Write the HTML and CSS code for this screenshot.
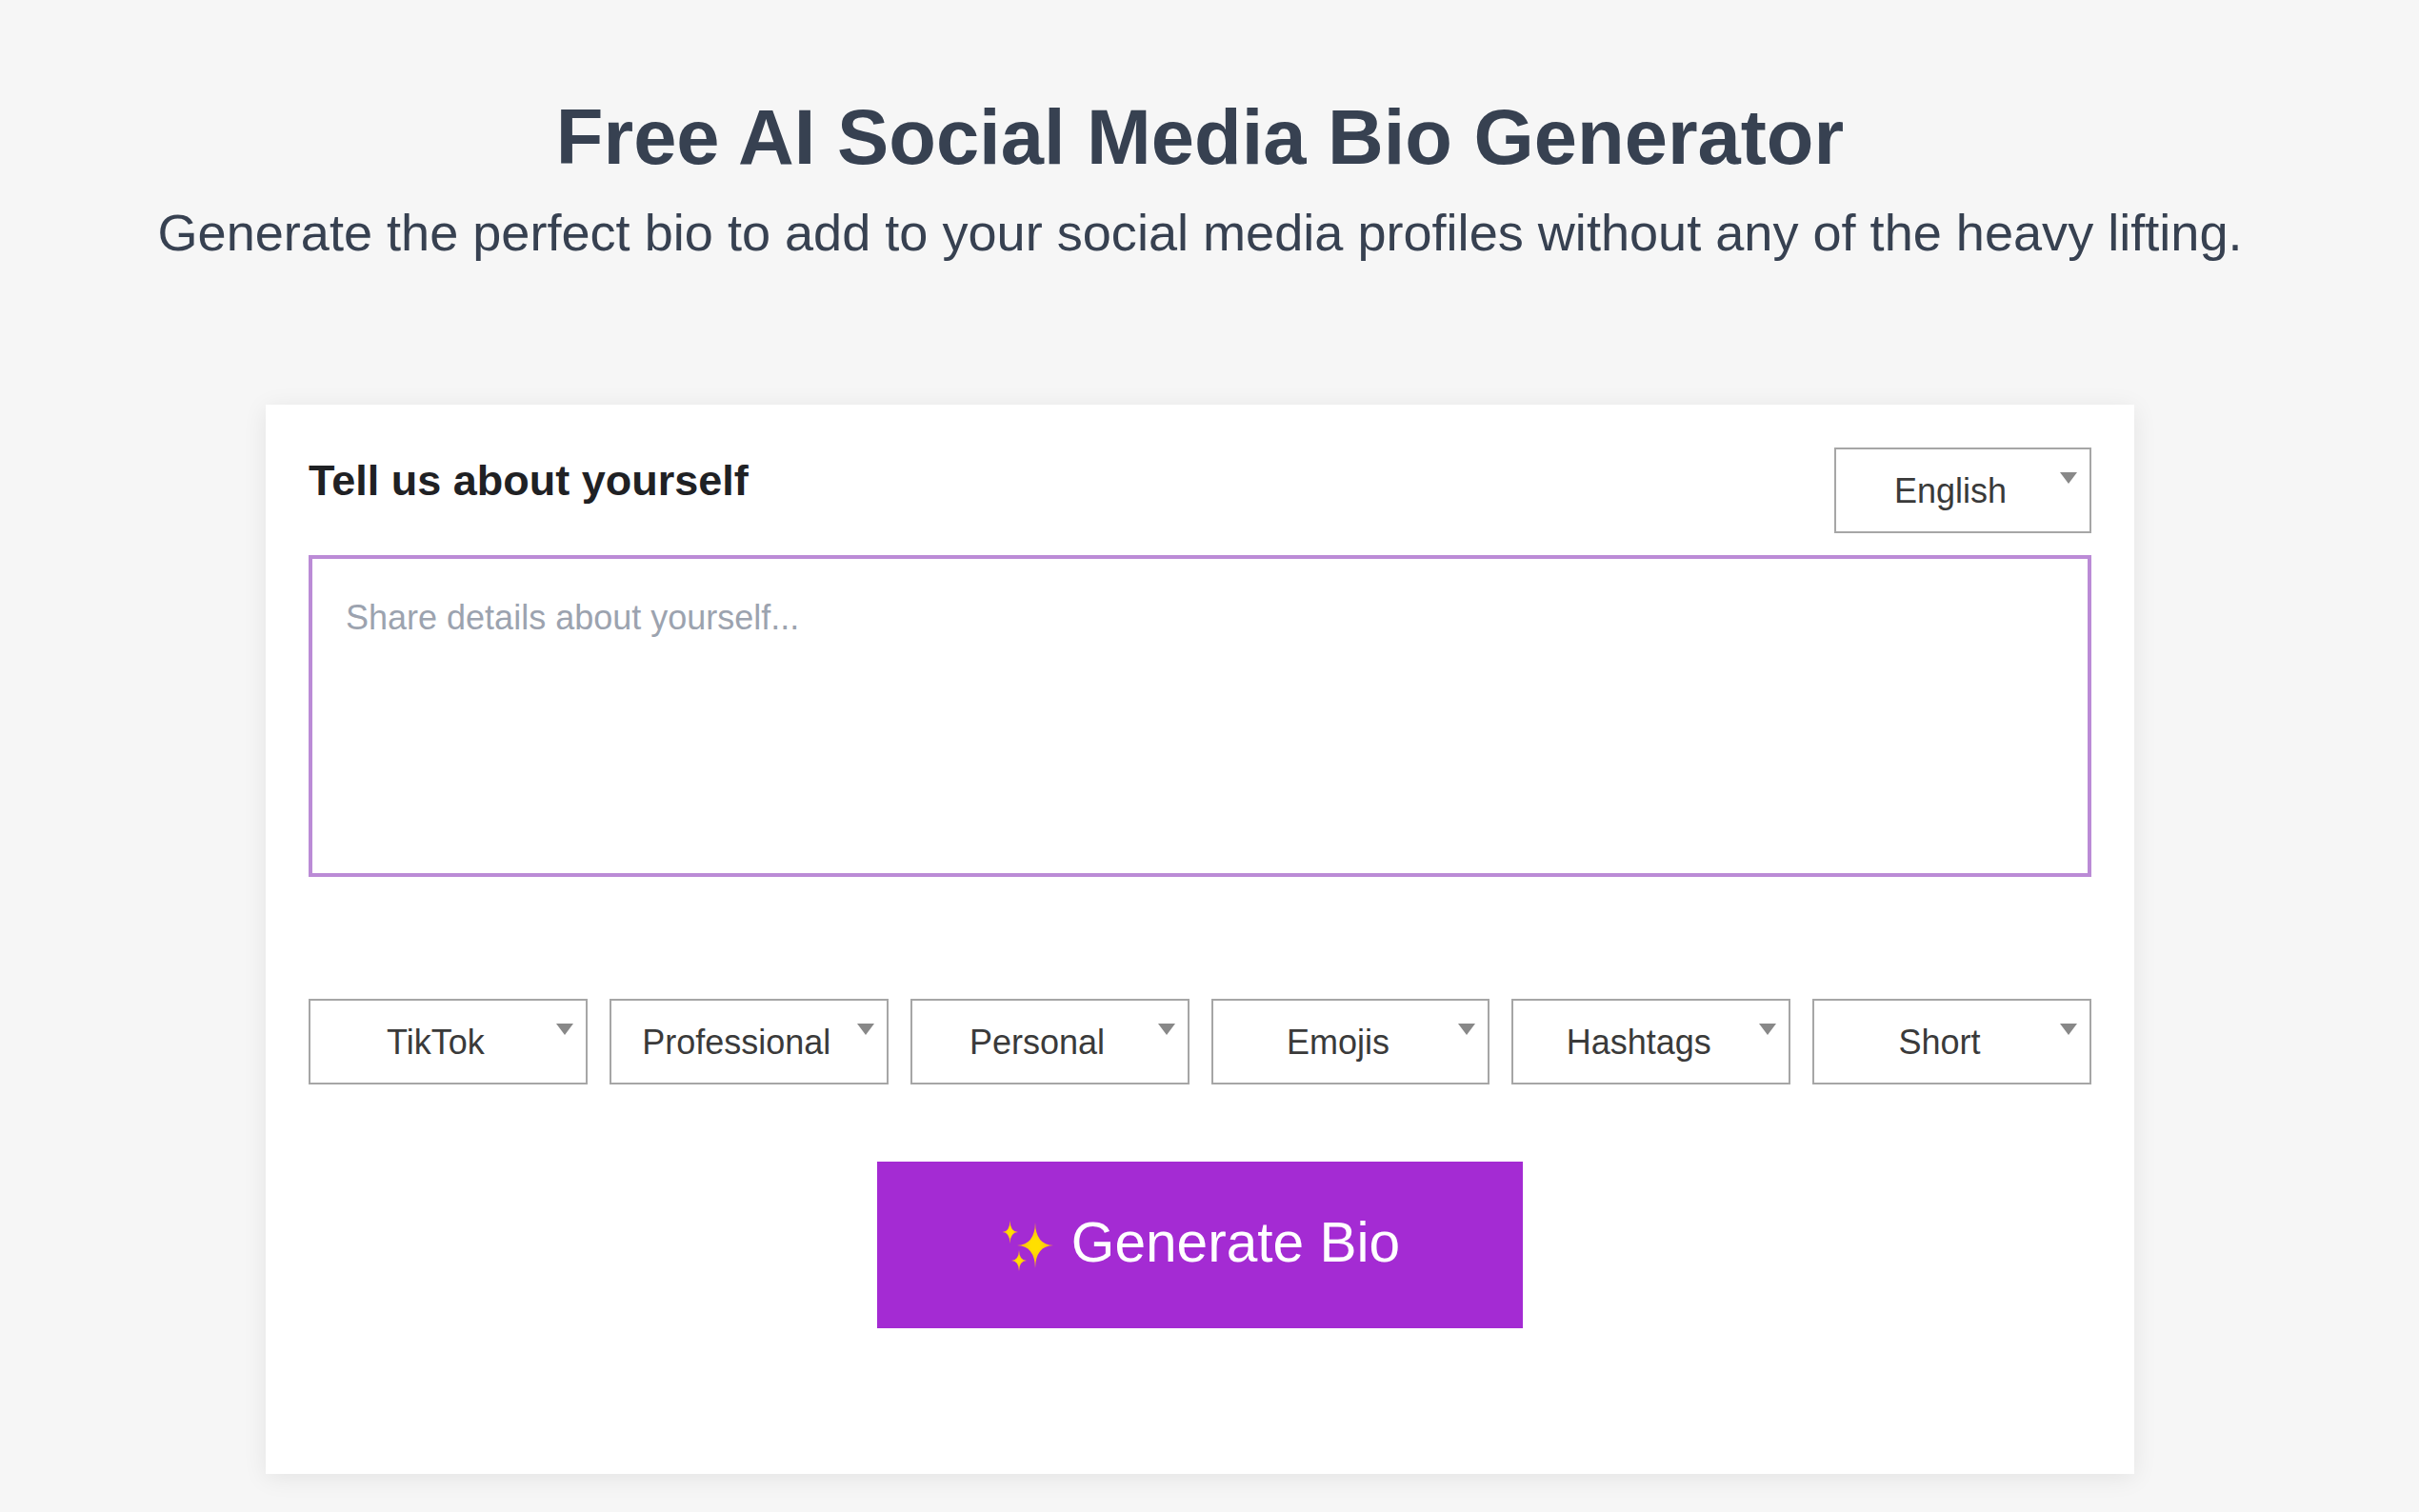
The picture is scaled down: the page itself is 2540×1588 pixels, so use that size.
FILE: index.html
```html
<!DOCTYPE html>
<html lang="en">
<head>
  <meta charset="UTF-8" />
  <title>Free AI Social Media Bio Generator</title>
  <link rel="stylesheet" href="styles.css">
</head>
<body>

  <header class="intro">
    <h1>Free AI Social Media Bio Generator</h1>
    <p>Generate the perfect bio to add to your social media profiles without any of the heavy lifting.</p>
  </header>

  <main class="card">
    <div class="card-top">
      <h2>Tell us about yourself</h2>
      <div class="picker picker-lang">
        <select><option>English</option></select>
      </div>
    </div>

    <textarea class="details" placeholder="Share details about yourself..."></textarea>

    <div class="options">
      <div class="picker"><select><option>TikTok</option></select></div>
      <div class="picker"><select><option>Professional</option></select></div>
      <div class="picker"><select><option>Personal</option></select></div>
      <div class="picker"><select><option>Emojis</option></select></div>
      <div class="picker"><select><option>Hashtags</option></select></div>
      <div class="picker"><select><option>Short</option></select></div>
    </div>

    <button class="generate" type="button">
      <svg class="sparkles" viewBox="0 0 60 56" aria-hidden="true">
        <defs>
          <radialGradient id="spark">
            <stop offset="0.25" stop-color="#ffdf00" />
            <stop offset="1" stop-color="#ffa81e" />
          </radialGradient>
        </defs>
        <path fill="url(#spark)" d="M37 4 Q37.500 27.500 56 28 Q37.500 28.500 37 52 Q36.500 28.500 18 28 Q36.500 27.500 37 4Z" />
        <path fill="url(#spark)" d="M10.500 2 Q10.800 13.700 19 14 Q10.800 14.300 10.500 26 Q10.200 14.300 2.500 14 Q10.200 13.700 10.500 2Z" />
        <path fill="url(#spark)" d="M20 33 Q20.300 43.700 28 44 Q20.300 44.300 20 55 Q19.700 44.300 12 44 Q19.700 43.700 20 33Z" />
      </svg>
      <span>Generate Bio</span>
    </button>
  </main>

</body>
</html>
```

FILE: styles.css
```css
body {
  font-family: 'Liberation Sans', Arial, sans-serif;
  margin: 0;
  padding-right: 20px; /* room the scrollbar would take */
  background: #f6f6f6;
  color: #374151;
}

/* === TITLE === */
.intro {
  padding-top: 96px;
  text-align: center;
}

.intro h1 {
  font-size: 81.3px;
  line-height: 96px;
  margin: 0;
}

.intro p {
  font-size: 54.1px;
  line-height: 64px;
  margin: 20px 0 0;
}

/* === CARD === */
.card {
  box-sizing: border-box;
  width: 1962px;
  height: 1123px;
  margin: 149px auto 40px;
  padding: 45px;
  background: #fff;
  box-shadow: 0 4px 24px rgba(0, 0, 0, 0.08);
}

.card-top {
  display: flex;
  justify-content: space-between;
  align-items: flex-start;
}

.card-top h2 {
  font-size: 45px;
  line-height: 54px;
  margin: 8px 0 0;
  color: #1f2124;
}

.details {
  display: block;
  box-sizing: border-box;
  width: 100%;
  height: 338px;
  margin-top: 23px;
  padding: 40px 35px;
  border: 4px solid #bb8bd6;
  border-radius: 0;
  outline: none;
  resize: none;
  font-family: inherit;
  font-size: 36px;
  line-height: 44px;
}

.details::placeholder {
  color: #9ca3af;
}

/* === DROPDOWNS === */
.options {
  display: grid;
  grid-template-columns: repeat(6, 1fr);
  gap: 23px;
  margin-top: 128px;
}

.picker {
  position: relative;
  height: 90px;
}

.picker-lang {
  width: 270px;
}

.picker select {
  appearance: none;
  box-sizing: border-box;
  width: 100%;
  height: 100%;
  padding: 0 34px 0 8px;
  border: 2px solid #a6a6a6;
  border-radius: 0;
  background: #fff;
  color: #3a3a3a;
  font-family: inherit;
  font-size: 36px;
  text-align: center;
}

/* little arrow sits over the select */
.picker::after {
  content: '';
  position: absolute;
  top: 26px;
  right: 15px;
  border-left: 9px solid transparent;
  border-right: 9px solid transparent;
  border-top: 12px solid #888;
  pointer-events: none;
}

/* === BUTTON === */
.generate {
  display: flex;
  align-items: center;
  justify-content: center;
  gap: 15px;
  width: 678px;
  height: 175px;
  margin: 81px auto 0;
  padding: 0;
  border: none;
  background: #a42bd3;
  color: #fff;
  font-family: inherit;
  font-size: 58.6px;
}

.generate span {
  margin-bottom: 6px;
}

.sparkles {
  width: 60px;
  height: 56px;
}
```
